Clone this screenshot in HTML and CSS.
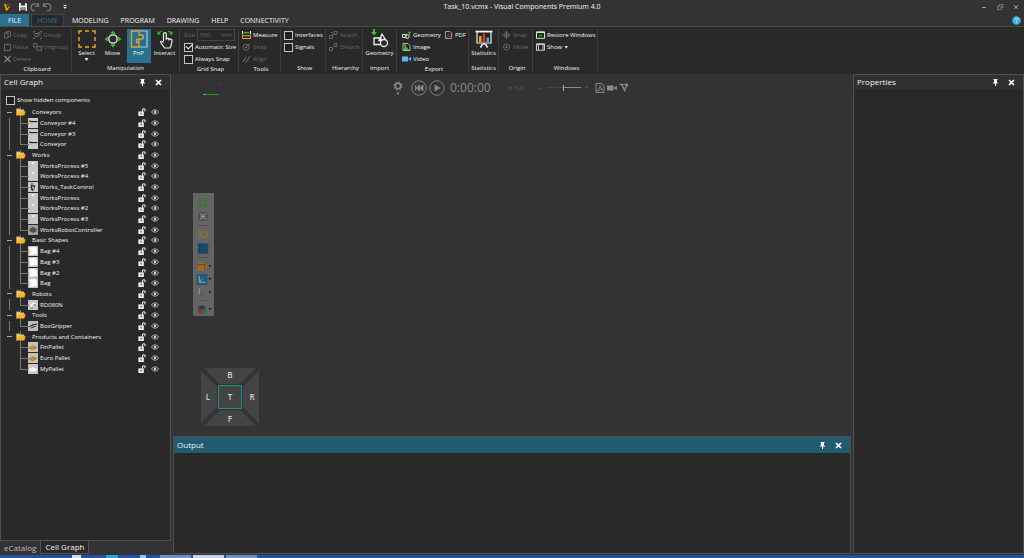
FILE: index.html
```html
<!DOCTYPE html>
<html lang="en">
<head>
<meta charset="utf-8">
<title>Task_10.vcmx - Visual Components Premium 4.0</title>
<link rel="stylesheet" href="styles.css">
</head>
<body>
<svg class="defs" aria-hidden="true">
  <symbol id="lock" viewBox="0 0 8 8"><path d="M4.500 3.500V2a1.300 1.300 0 0 1 2.600 0v1.300" fill="none" stroke="#f2f2f2" stroke-width="1.100"/><path d="M.4 3.400h5.400V8H.4z" fill="#f2f2f2"/><path d="M2.600 4.800h1v1.700h-1z" fill="#292929"/></symbol>
  <symbol id="eye" viewBox="0 0 8 6"><path d="M.4 3Q4-1.400 7.600 3 4 7.400.4 3z" fill="none" stroke="#d8d8d8" stroke-width=".8"/><circle cx="4" cy="3" r="1.200" fill="#d8d8d8"/></symbol>
  <symbol id="folder" viewBox="0 0 10 8"><path d="M.5 7.500V.8h3l.8 1H8v1.400" fill="#e9cf8b" stroke="#c9a55a" stroke-width=".5"/><path d="M2 3.200h7.700L8.300 7.600H.5z" fill="#ffb21c"/></symbol>
  <symbol id="pin" viewBox="0 0 6 7"><path d="M1 0h4v1h-.5v2L6 4.500H3.500V7h-1V4.500H0L1.500 3V1H1z" fill="#fff"/></symbol>
  <symbol id="close" viewBox="0 0 7 7"><path d="M1 1l5 5M6 1L1 6" stroke="#fff" stroke-width="1.700"/></symbol>
  <symbol id="t-conveyor" viewBox="0 0 10 10"><path d="M0 0h10v10H0z" fill="#c9c9c9"/><path d="M1 3l3 .7 5.500-.2" stroke="#20252a" stroke-width="1.200" fill="none"/><path d="M3 4.500v1.500M8 4v1.500" stroke="#888" stroke-width=".6"/></symbol>
  <symbol id="t-process" viewBox="0 0 10 10"><path d="M0 0h10v10H0z" fill="#c6c6c6"/><path d="M3 2l2-1 2 1-2 1z" fill="#f4f4f4"/></symbol>
  <symbol id="t-task" viewBox="0 0 10 10"><path d="M0 0h10v10H0z" fill="#c9c9c9"/><path d="M3 2l2 1.500L7 3v5l-3 1-1.500-3z" fill="#333"/><circle cx="4" cy="2" r="1.300" fill="#3d8fd0"/><path d="M4 5l2 1v2" stroke="#fff" fill="none"/></symbol>
  <symbol id="t-robot" viewBox="0 0 10 10"><path d="M0 0h10v10H0z" fill="#a0a0a0"/><path d="M1.500 4l3-2 4 1.500v3L5 8 2 6.500z" fill="#4a525b"/></symbol>
  <symbol id="t-bag" viewBox="0 0 10 10"><path d="M0 0h10v10H0z" fill="#c4c4c4"/><path d="M1.500 1.500l6-.7L9 3v5L2 9z" fill="#fff"/></symbol>
  <symbol id="t-arm" viewBox="0 0 10 10"><path d="M0 0h10v10H0z" fill="#c9c9c9"/><path d="M3 8V5l2-2 3 1M3 5h2" stroke="#f5f5f5" stroke-width="1.300" fill="none"/><path d="M2 8h3M7 4v2" stroke="#777"/></symbol>
  <symbol id="t-grip" viewBox="0 0 10 10"><path d="M0 0h10v10H0z" fill="#bdbdbd"/><path d="M1 6l3-2 5-1M3 7l5-2" stroke="#333"/></symbol>
  <symbol id="t-pallet" viewBox="0 0 10 10"><path d="M0 0h10v10H0z" fill="#c9c2b6"/><path d="M1 5l4-2 4 2-3 2z" fill="#cf8b2c"/><path d="M1 6l4 1.500L9 5" stroke="#7d4d14" fill="none" stroke-dasharray="1.500 .7"/></symbol>
  <symbol id="t-my" viewBox="0 0 10 10"><path d="M0 0h10v10H0z" fill="#c9c9c9"/><path d="M1 5l4-2 4 2v2l-4 .5L1 7z" fill="#f5f5f5"/></symbol>
</svg>
<div class="app">
  <header class="titlebar">
    <div class="quick">
      <svg class="logo" viewBox="0 0 8 8"><path d="M1 1h2l1 4.500L6 3h1L4.500 7.500H3z" fill="#f5a800"/><path d="M4 1.500h3" stroke="#7d6a35" stroke-width=".8"/></svg>
      <button aria-label="Save"><svg viewBox="0 0 10 10"><path d="M1 1h7l1 1v7H1z" fill="#eee"/><path d="M3 1h4v2.500H3zM2.500 5.500h5V9h-5z" fill="#333"/><path d="M3 7h4" stroke="#eee"/></svg></button>
      <button aria-label="Redo"><svg viewBox="0 0 10 10"><path d="M8.500 1v3.500H5M8 4.200A3.500 3.500 0 1 0 5 8.700" fill="none" stroke="#777" stroke-width="1.200"/></svg></button>
      <button aria-label="Undo"><svg viewBox="0 0 10 10"><path d="M1.500 1v3.500H5M2 4.200A3.500 3.500 0 1 1 5 8.700" fill="none" stroke="#777" stroke-width="1.200"/></svg></button>
      <button aria-label="Customize" class="more"><svg viewBox="0 0 6 6"><path d="M1.500 1.500h3" stroke="#eee"/><path d="M1.200 3h3.600L3 5z" fill="#eee"/></svg></button>
    </div>
    <h1>Task_10.vcmx - Visual Components Premium 4.0</h1>
    <div class="winbtns">
      <button aria-label="Minimize"><svg viewBox="0 0 8 8"><path d="M2 4.500h4" stroke="#999"/></svg></button>
      <button aria-label="Restore"><svg viewBox="0 0 8 8"><path d="M1.500 3.500h4v3h-4zM3 3.500v-2h4v3H5.500" fill="none" stroke="#888" stroke-width=".8"/></svg></button>
      <button aria-label="Close"><svg viewBox="0 0 8 8"><path d="M2 2l4 4M6 2L2 6" stroke="#999"/></svg></button>
    </div>
  </header>
  <nav class="tabs">
    <button class="file">FILE</button><button class="current">HOME</button><button>MODELING</button><button>PROGRAM</button><button>DRAWING</button><button>HELP</button><button>CONNECTIVITY</button>
    <button class="help" aria-label="Help topics"><svg viewBox="0 0 9 9"><circle cx="4.500" cy="4.500" r="4.300" fill="#42afe3"/><path d="M3.200 3.500q0-1.400 1.300-1.400t1.300 1.200q0 .8-1.300 1.500v.7M4.500 6.300v.9" stroke="#d8f0fb" fill="none" stroke-width=".9"/></svg></button>
  </nav>
  <div class="ribbon">
    <section class="group">
      <div class="cols clip">
        <div class="col">
          <button class="cmd off"><svg viewBox="0 0 8 8"><path d="M1 2h3.500v5H1zM3 2V.7h4v5H4.500" fill="none" stroke="#666"/></svg>Copy</button>
          <button class="cmd off"><svg viewBox="0 0 8 8"><path d="M1 1.500h6v6H1zM3 1h2" fill="none" stroke="#666"/></svg>Paste</button>
          <button class="cmd off"><svg viewBox="0 0 8 8"><path d="M1 1l6 6M7 1L1 7" stroke="#888" stroke-width="1.200"/></svg>Delete</button>
        </div>
        <div class="col">
          <button class="cmd off"><svg viewBox="0 0 9 8"><path d="M.5 2V.5H2M7 .5h1.500V2M8.500 6v1.500H7M2 7.500H.5V6M2 2.500h3v3H2zM4 2h3v3" fill="none" stroke="#666"/></svg>Group</button>
          <button class="cmd off"><svg viewBox="0 0 9 8"><path d="M.5 2V.5H4V4H.5zM4 3.500h4.500v4H4z" fill="none" stroke="#666"/></svg>Ungroup</button>
        </div>
      </div>
      <h2>Clipboard</h2>
    </section>
    <section class="group">
      <div class="cols bigs">
        <button class="big"><svg viewBox="0 0 20 20"><path d="M2 5V2h3M8 2h4M15 2h3v3M18 8v4M18 15v3h-3M12 18H8M5 18H2v-3M2 12V8" fill="none" stroke="#f0a818" stroke-width="1.400"/></svg>Select<i class="caret"></i></button>
        <button class="big"><svg viewBox="0 0 20 20"><circle cx="10" cy="10" r="4.200" fill="none" stroke="#eee" stroke-width="1.300"/><path d="M10 1.500l2.800 3.300H7.200zM10 18.500l2.800-3.300H7.200zM1.500 10l3.300-2.800v5.600zM18.500 10l-3.300-2.800v5.600z" fill="#35c31f"/></svg>Move</button>
        <button class="big on"><svg viewBox="0 0 20 20"><path d="M10 2h8v16h-8" fill="none" stroke="#a9cddd" stroke-width="1.200"/><path d="M10 2H2.500v16H10v-4.500H7.500v-3H10M10 2v4h2.500a2 2 0 1 1 0 4H10v3" fill="none" stroke="#e0a52e" stroke-width="1.300"/></svg>PnP</button>
        <button class="big"><svg viewBox="0 0 20 20"><path d="M8.500 12V5a1.400 1.400 0 0 1 2.800 0v4l5 1.300q1 .5.700 2L16 17l-1 2H9.500L5.500 13q1-1.700 3 .5M11.300 9v2M13.800 9.500v2" fill="none" stroke="#eee" stroke-width="1.200"/><path d="M4 3.500q1.500-1 3-1M13 2.500q1.500 0 3 1" fill="none" stroke="#35c31f" stroke-width="1.200"/><path d="M2.500 2v3.500H6zM17.500 2v3.500H14z" fill="#35c31f"/></svg>Interact</button>
      </div>
      <h2>Manipulation</h2>
    </section>
    <section class="group">
      <div class="col snap">
        <div class="size off"><label for="size">Size</label><span class="field"><input id="size" value="500" disabled><span>mm</span></span></div>
        <label class="check"><input type="checkbox" checked>Automatic Size</label>
        <label class="check"><input type="checkbox">Always Snap</label>
      </div>
      <h2>Grid Snap</h2>
    </section>
    <section class="group">
      <div class="col">
        <button class="cmd"><svg viewBox="0 0 9 8"><path d="M.5 0v3.500M8.500 0v3.500" stroke="#eee"/><path d="M1.500 1.700h6" stroke="#35c31f" stroke-width="1.200"/><path d="M.5 4.700h8v2.800h-8z" fill="none" stroke="#f0a818"/></svg>Measure</button>
        <button class="cmd off"><svg viewBox="0 0 9 8"><circle cx="4" cy="4.300" r="3" fill="none" stroke="#666"/><path d="M4 4.300L7.500.8M3 4.300h2" stroke="#777"/></svg>Snap</button>
        <button class="cmd off"><svg viewBox="0 0 9 8"><path d="M1 7l3-5M4 7.500L8 1" stroke="#777"/></svg>Align</button>
      </div>
      <h2>Tools</h2>
    </section>
    <section class="group">
      <div class="col">
        <label class="check"><input type="checkbox">Interfaces</label>
        <label class="check"><input type="checkbox">Signals</label>
      </div>
      <h2>Show</h2>
    </section>
    <section class="group">
      <div class="col">
        <button class="cmd off"><svg viewBox="0 0 9 8"><path d="M.5 4.500h3v3h-3zM5 .5h3v3H5zM3 4.500L5 3M2 1.500h1.500" fill="none" stroke="#666"/></svg>Attach</button>
        <button class="cmd off"><svg viewBox="0 0 9 8"><path d="M.5 4.500h3v3h-3zM5 .5h3v3H5z" fill="none" stroke="#666"/></svg>Detach</button>
      </div>
      <h2>Hierarchy</h2>
    </section>
    <section class="group">
      <div class="cols bigs">
        <button class="big"><svg viewBox="0 0 20 20"><path d="M4 0v4" stroke="#35c31f" stroke-width="2"/><path d="M1 3h6L4 6.500z" fill="#35c31f"/><path d="M4 9h7v6.500H4zM12 5l4 6.500H9z" fill="none" stroke="#eee" stroke-width="1.300"/><circle cx="14" cy="14" r="3.500" fill="#292929" stroke="#eee" stroke-width="1.300"/></svg>Geometry</button>
      </div>
      <h2>Import</h2>
    </section>
    <section class="group">
      <div class="cols export">
        <div class="col">
          <button class="cmd"><svg viewBox="0 0 9 8"><path d="M.5 3.500h3.500v3H.5z" fill="none" stroke="#ddd"/><circle cx="5.200" cy="5.500" r="1.900" fill="none" stroke="#ddd"/><path d="M7.500 4V1M6 2.200L7.500.7 9 2.200" stroke="#35c31f" fill="none"/></svg>Geometry</button>
          <button class="cmd"><svg viewBox="0 0 9 8"><path d="M1 .5h5L8 2.500v5H1z" fill="#222" stroke="#ddd" stroke-width=".8"/><path d="M2 7V5l2-2 3 4z" fill="#35c31f"/><circle cx="3" cy="2.500" r="1" fill="#f0a818"/></svg>Image</button>
          <button class="cmd"><svg viewBox="0 0 9 8"><path d="M0 1.500h6v5H0zM6 4l3-2.300v4.600z" fill="#5bb9ee"/></svg>Video</button>
        </div>
        <div class="col">
          <button class="cmd"><svg viewBox="0 0 8 8"><path d="M1 .5h4.500l1.500 1.500v5.500H1z" fill="#222" stroke="#bbb" stroke-width=".8"/><path d="M2 6.500q2-2 2-4.500 0 3 2.500 3.500-2.500-.3-4.500 1z" stroke="#b33427" fill="none" stroke-width=".7"/></svg>PDF</button>
        </div>
      </div>
      <h2>Export</h2>
    </section>
    <section class="group">
      <div class="cols bigs">
        <button class="big"><svg viewBox="0 0 20 20"><path d="M1.500 2.500h17" stroke="#fff" stroke-width="1.600"/><path d="M3 3h14v11H3z" fill="#222" stroke="#eee" stroke-width="1.200"/><path d="M10 14v2M6.500 18.500l2-3.500M13.500 18.500l-2-3.500" stroke="#eee" stroke-width="1.600"/><path d="M5 7h2.500v6H5z" fill="#f0a818"/><path d="M8.700 4.500h2.500V13H8.700z" fill="#e0342b"/><path d="M12.500 8.500H15V13h-2.500z" fill="#4aa8e0"/></svg>Statistics</button>
      </div>
      <h2>Statistics</h2>
    </section>
    <section class="group">
      <div class="col">
        <button class="cmd off"><svg viewBox="0 0 8 8"><circle cx="4" cy="4" r="2.300" fill="none" stroke="#666"/><path d="M4 0v8M0 4h8" stroke="#666"/></svg>Snap</button>
        <button class="cmd off"><svg viewBox="0 0 8 8"><circle cx="4" cy="4" r="3" fill="none" stroke="#666"/><circle cx="4" cy="4" r="1" fill="#777"/></svg>Move</button>
      </div>
      <h2>Origin</h2>
    </section>
    <section class="group">
      <div class="col">
        <button class="cmd"><svg viewBox="0 0 9 8"><path d="M.5.8h8v6.500h-8z" fill="#143214" stroke="#ddd"/><path d="M.5 1.500h8" stroke="#ddd"/><path d="M3 4.500h3" stroke="#35c31f"/></svg>Restore Windows</button>
        <button class="cmd"><svg viewBox="0 0 9 8"><path d="M.5.8h8v6.500h-8z" fill="#222" stroke="#ccc"/><path d="M.5 1.500h8M2.500 1v6M7 2v5" stroke="#ccc"/></svg>Show<i class="caret"></i></button>
      </div>
      <h2>Windows</h2>
    </section>
  </div>

  <main class="work">
    <aside class="left">
      <section class="panel">
        <header class="head"><h3>Cell Graph</h3><button aria-label="Pin"><svg viewBox="0 0 6 7"><use href="#pin"/></svg></button><button aria-label="Close"><svg viewBox="0 0 7 7"><use href="#close"/></svg></button></header>
        <label class="check hidden-check"><input type="checkbox">Show hidden components</label>
        <ul class="tree">
          <li class="folder"><button class="tog" aria-label="Collapse"></button><svg class="fi"><use href="#folder"/></svg><span>Conveyors</span><svg class="lk"><use href="#lock"/></svg><svg class="ey"><use href="#eye"/></svg></li>
          <li><svg class="th"><use href="#t-conveyor"/></svg><span>Conveyor #4</span><svg class="lk"><use href="#lock"/></svg><svg class="ey"><use href="#eye"/></svg></li>
          <li><svg class="th"><use href="#t-conveyor"/></svg><span>Conveyor #3</span><svg class="lk"><use href="#lock"/></svg><svg class="ey"><use href="#eye"/></svg></li>
          <li class="end"><svg class="th"><use href="#t-conveyor"/></svg><span>Conveyor</span><svg class="lk"><use href="#lock"/></svg><svg class="ey"><use href="#eye"/></svg></li>
          <li class="folder"><button class="tog" aria-label="Collapse"></button><svg class="fi"><use href="#folder"/></svg><span>Works</span><svg class="lk"><use href="#lock"/></svg><svg class="ey"><use href="#eye"/></svg></li>
          <li><svg class="th"><use href="#t-process"/></svg><span>WorksProcess #5</span><svg class="lk"><use href="#lock"/></svg><svg class="ey"><use href="#eye"/></svg></li>
          <li><svg class="th"><use href="#t-process"/></svg><span>WorksProcess #4</span><svg class="lk"><use href="#lock"/></svg><svg class="ey"><use href="#eye"/></svg></li>
          <li><svg class="th"><use href="#t-task"/></svg><span>Works_TaskControl</span><svg class="lk"><use href="#lock"/></svg><svg class="ey"><use href="#eye"/></svg></li>
          <li><svg class="th"><use href="#t-process"/></svg><span>WorksProcess</span><svg class="lk"><use href="#lock"/></svg><svg class="ey"><use href="#eye"/></svg></li>
          <li><svg class="th"><use href="#t-process"/></svg><span>WorksProcess #2</span><svg class="lk"><use href="#lock"/></svg><svg class="ey"><use href="#eye"/></svg></li>
          <li><svg class="th"><use href="#t-process"/></svg><span>WorksProcess #3</span><svg class="lk"><use href="#lock"/></svg><svg class="ey"><use href="#eye"/></svg></li>
          <li class="end"><svg class="th"><use href="#t-robot"/></svg><span>WorksRobotController</span><svg class="lk"><use href="#lock"/></svg><svg class="ey"><use href="#eye"/></svg></li>
          <li class="folder"><button class="tog" aria-label="Collapse"></button><svg class="fi"><use href="#folder"/></svg><span>Basic Shapes</span><svg class="lk"><use href="#lock"/></svg><svg class="ey"><use href="#eye"/></svg></li>
          <li><svg class="th"><use href="#t-bag"/></svg><span>Bag #4</span><svg class="lk"><use href="#lock"/></svg><svg class="ey"><use href="#eye"/></svg></li>
          <li><svg class="th"><use href="#t-bag"/></svg><span>Bag #3</span><svg class="lk"><use href="#lock"/></svg><svg class="ey"><use href="#eye"/></svg></li>
          <li><svg class="th"><use href="#t-bag"/></svg><span>Bag #2</span><svg class="lk"><use href="#lock"/></svg><svg class="ey"><use href="#eye"/></svg></li>
          <li class="end"><svg class="th"><use href="#t-bag"/></svg><span>Bag</span><svg class="lk"><use href="#lock"/></svg><svg class="ey"><use href="#eye"/></svg></li>
          <li class="folder"><button class="tog" aria-label="Collapse"></button><svg class="fi"><use href="#folder"/></svg><span>Robots</span><svg class="lk"><use href="#lock"/></svg><svg class="ey"><use href="#eye"/></svg></li>
          <li class="end"><svg class="th"><use href="#t-arm"/></svg><span>RD080N</span><svg class="lk"><use href="#lock"/></svg><svg class="ey"><use href="#eye"/></svg></li>
          <li class="folder"><button class="tog" aria-label="Collapse"></button><svg class="fi"><use href="#folder"/></svg><span>Tools</span><svg class="lk"><use href="#lock"/></svg><svg class="ey"><use href="#eye"/></svg></li>
          <li class="end"><svg class="th"><use href="#t-grip"/></svg><span>BoxGripper</span><svg class="lk"><use href="#lock"/></svg><svg class="ey"><use href="#eye"/></svg></li>
          <li class="folder"><button class="tog" aria-label="Collapse"></button><svg class="fi"><use href="#folder"/></svg><span>Products and Containers</span><svg class="lk"><use href="#lock"/></svg><svg class="ey"><use href="#eye"/></svg></li>
          <li class="last"><svg class="th"><use href="#t-pallet"/></svg><span>FinPallet</span><svg class="lk"><use href="#lock"/></svg><svg class="ey"><use href="#eye"/></svg></li>
          <li class="last"><svg class="th"><use href="#t-pallet"/></svg><span>Euro Pallet</span><svg class="lk"><use href="#lock"/></svg><svg class="ey"><use href="#eye"/></svg></li>
          <li class="last end"><svg class="th"><use href="#t-my"/></svg><span>MyPallet</span><svg class="lk"><use href="#lock"/></svg><svg class="ey"><use href="#eye"/></svg></li>
        </ul>
      </section>
      <nav class="side-tabs"><button>eCatalog</button><button class="current">Cell Graph</button></nav>
    </aside>

    <div class="center">
      <section class="view">
        <svg class="axes" viewBox="0 0 20 16"><path d="M1 13h16v1H1z" fill="#239a1a"/><path d="M1 13h3v1H1z" fill="#35d31f"/><path d="M17 1h1v5h-1z" fill="#7d2a20"/><path d="M16 5h1v8h-1z" fill="#20207a"/></svg>
        <div class="sim">
          <button aria-label="Settings" class="gear"><svg viewBox="0 0 10 15"><circle cx="5" cy="5" r="2.600" fill="none" stroke="#8a8a8a" stroke-width="1.400"/><circle cx="5" cy="5" r="3.900" fill="none" stroke="#8a8a8a" stroke-width="1.400" stroke-dasharray="1.600 1.463"/><path d="M3.300 11.500h3.400L5 14z" fill="#8a8a8a"/></svg></button>
          <button aria-label="Reset"><svg viewBox="0 0 16 16"><circle cx="8" cy="8" r="7.200" fill="none" stroke="#868686" stroke-width=".9"/><path d="M4.500 5v6M8.500 5v6l-3.500-3zM12 5v6L8.500 8z" fill="#868686" stroke="#868686" stroke-width=".8"/></svg></button>
          <button aria-label="Play"><svg viewBox="0 0 16 16"><circle cx="8" cy="8" r="7.200" fill="none" stroke="#868686" stroke-width=".9"/><path d="M5.500 4.500L12 8l-6.500 3.500z" fill="#868686"/></svg></button>
          <time>0:00:00</time>
          <span class="speed">x&nbsp; 1.0</span>
          <label class="slide"><span>–</span><input type="range" aria-label="Speed" value="50"><span>+</span></label>
          <button aria-label="Export PDF" class="sm"><svg viewBox="0 0 10 10"><path d="M1 .5h5.500L9 3v6.500H1z" fill="none" stroke="#8a8a8a"/><path d="M2.500 8Q5 5.500 5 2.500q0 3.500 3 4-3-.3-5.500 1.500z" fill="none" stroke="#8a8a8a" stroke-width=".8"/></svg></button>
          <button aria-label="Record" class="sm"><svg viewBox="0 0 10 10"><path d="M0 2.500h6.500v5H0zM7 4.500L10 3v4L7 5.500z" fill="#8a8a8a"/></svg></button>
          <button aria-label="Record viewer" class="sm"><svg viewBox="0 0 10 10"><path d="M.5 1.500h2.300l3.200 7M5.500 1.500H8L5.500 7.500" fill="none" stroke="#8a8a8a" stroke-width="1.300"/><path d="M3 1.500h2.500M8.500 1v2.500" stroke="#8a8a8a"/></svg></button>
        </div>
        <div class="viewtools">
          <button aria-label="Fill"><svg viewBox="0 0 12 12"><path d="M2 4.500V2h2.500M7.500 2H10v2.500M10 7.500V10H7.500M4.500 10H2V7.500M2 2l3 3M10 2L7 5M10 10L7 7M2 10l3-3" fill="none" stroke="#2f7a28" stroke-width="1.300"/></svg></button>
          <button aria-label="Fill selected"><svg viewBox="0 0 12 12"><path d="M2 2h8v8H2z" fill="none" stroke="#444" stroke-width="1.500"/><path d="M4 6h4M6 4v4M2 2l2 2M10 2L8 4M2 10l2-2M10 10L8 8" stroke="#999"/></svg></button>
          <hr>
          <button aria-label="Headlight"><svg viewBox="0 0 12 12"><path d="M10 3H6.500a3 3 0 0 0 0 6H10V3M10 6h2M1 3h3M1 6h3M1 9h3" fill="none" stroke="#a3752a"/></svg></button>
          <button aria-label="Perspective"><svg viewBox="0 0 12 12"><path d="M0 0h12v12H0z" fill="#22597a"/><path d="M2 2h8v8H2zM4 4h4v4H4zM2 2l2 2" fill="none" stroke="#12303f" stroke-width=".8"/></svg></button>
          <hr>
          <button class="drop" aria-label="Render mode"><svg viewBox="0 0 12 12"><path d="M1 4l2-2h8v6l-2 2H1z" fill="#a36b20"/><path d="M1 4h8v6M9 4l2-2" stroke="#4a3618" fill="none" stroke-width=".7"/></svg><i class="caret"></i></button>
          <button class="drop" aria-label="Coordinates"><svg viewBox="0 0 12 12"><path d="M0 0h12v12H0z" fill="#22597a"/><path d="M3 2v7h7M3 9l4-4" stroke="#9ab3c0" fill="none"/></svg><i class="caret"></i></button>
          <button class="drop" aria-label="Frame types"><svg viewBox="0 0 12 12"><path d="M3 1v8" stroke="#999"/><path d="M3 9h7" stroke="#9a3b35"/><path d="M3 9l5-4" stroke="#2f7a28"/></svg><i class="caret"></i></button>
          <hr>
          <button class="drop" aria-label="Views"><svg viewBox="0 0 12 12"><path d="M6 1l4.500 2.500L6 6 1.500 3.500z" fill="#29364d"/><path d="M1.500 3.500L6 6v5.500L1.500 9z" fill="#8b332c"/><path d="M10.500 3.500L6 6v5.500L10.500 9z" fill="#286a4a"/></svg><i class="caret"></i></button>
        </div>
        <svg class="compass" viewBox="0 0 58 58" role="img" aria-label="View selector">
          <path d="M3 0h52L39 16H19zM3 58h52L39 42H19zM0 3v52l16-16V19zM58 3v52L42 39V19z" fill="#444"/>
          <path d="M17.500 17.500h23v23h-23z" fill="#444" stroke="#1a8f8f"/>
          <g fill="#d0d0d0" font-size="8" text-anchor="middle"><text x="29" y="10">B</text><text x="29" y="32">T</text><text x="29" y="54">F</text><text x="7" y="32">L</text><text x="51" y="32">R</text></g>
        </svg>
      </section>
      <section class="panel output">
        <header class="head"><h3>Output</h3><button aria-label="Pin"><svg viewBox="0 0 6 7"><use href="#pin"/></svg></button><button aria-label="Close"><svg viewBox="0 0 7 7"><use href="#close"/></svg></button></header>
      </section>
    </div>

    <aside class="panel props">
      <header class="head"><h3>Properties</h3><button aria-label="Pin"><svg viewBox="0 0 6 7"><use href="#pin"/></svg></button><button aria-label="Close"><svg viewBox="0 0 7 7"><use href="#close"/></svg></button></header>
    </aside>
  </main>
  <footer class="taskbar"><i class="a"></i><i class="b"></i><i class="c"></i><i class="win"></i><i class="win active"></i><i class="win"></i></footer>
</div>
</body>
</html>
```
FILE: styles.css
```css
* { box-sizing: border-box; }
html, body { height: 100%; margin: 0; }
body { background: #333; color: #f4f4f4; font: 7px/10px "Open Sans", "Noto Sans", sans-serif; overflow: hidden; }
button { background: none; border: 0; padding: 0; margin: 0; color: inherit; font: inherit; display: flex; align-items: center; }
h1, h2, h3 { margin: 0; font-weight: 400; }
svg { display: block; flex: none; }
.defs { position: absolute; width: 0; height: 0; }
.app { height: 100vh; display: flex; flex-direction: column; }

.titlebar { height: 13px; display: grid; grid-template-columns: 1fr auto 1fr; align-items: center; }
.titlebar h1 { font-size: 7px; padding-left: 20px; }
.quick { display: flex; align-items: center; padding-left: 3px; gap: 2px; }
.quick svg { width: 10px; height: 10px; }
.quick .logo { width: 8px; height: 8px; margin-right: 5px; }
.quick .more { padding-left: 8px; }
.quick .more svg { width: 6px; height: 6px; }
.winbtns { display: flex; justify-content: flex-end; gap: 8px; padding-right: 4px; }
.winbtns svg { width: 8px; height: 8px; }

.tabs { height: 14px; display: flex; padding-top: 1px; border-bottom: 1px solid #4a4a4a; }
.tabs button { padding: 2px 6px 0; }
.tabs .file { background: #2a7190; padding: 2px 8px 0; margin-right: 2px; }
.tabs .current { background: #292929; border: 1px solid #444; border-bottom: 0; color: #2f7294; padding: 1px 5px 0; margin-right: 2px; }
.tabs .help { margin-left: auto; padding: 0 3px; }
.help svg { width: 9px; height: 9px; }

.ribbon { height: 47px; background: #292929; display: grid; grid-template-columns: 72px 108px 59px 42px 45px 37px 34px 72px 30px 34px 65px; padding: 2px 0 0; }
.group { display: flex; flex-direction: column; justify-content: space-between; height: 43px; border-right: 1px solid #3d3d3d; padding-left: 3px; }
.group:has(.bigs) { padding-left: 0; }
.group h2 { font-size: 6px; line-height: 8px; text-align: center; }
.cols { display: flex; gap: 3px; }
.clip { gap: 2px; }
.cmd { height: 12px; gap: 2px; font-size: 6px; white-space: nowrap; }
.cmd svg { width: 9px; height: 8px; }
.clip .cmd { gap: 1px; }
.export { padding-left: 2px; }
.off { color: #6a6a6a; }
.bigs { justify-content: center; gap: 2px; }
.big { flex-direction: column; width: 24px; height: 34px; font-size: 6px; line-height: 9px; }
.big svg { width: 20px; height: 20px; }
.big.on { background: #2a7190; }
.caret { width: 4px; height: 3px; background: currentColor; clip-path: polygon(0 0, 100% 0, 50% 100%); }
.check { display: flex; align-items: center; gap: 2px; height: 12px; font-size: 6px; white-space: nowrap; }
.snap { padding-left: 1px; }
.check input { appearance: none; width: 9px; height: 9px; margin: 0; border: 1px solid #c4c4c4; background: #202020; flex: none; display: grid; place-items: center; }
.check input:checked::before { content: ""; width: 5px; height: 3px; border: solid #fff; border-width: 0 0 1px 1px; rotate: -45deg; margin-bottom: 2px; }
.size { display: flex; align-items: center; height: 12px; font-size: 6px; gap: 2px; }
.field { display: flex; flex: 1; border: 1px solid #444; margin-right: 3px; padding: 0 2px; }
.field input { flex: 1; width: 10px; min-width: 0; padding: 0; border: 0; background: none; color: inherit; font: inherit; }

.work { flex: 1; min-height: 0; display: grid; grid-template-columns: 171px minmax(0, 1fr) 171px; column-gap: 2px; padding-bottom: 1px; }
.left { display: flex; flex-direction: column; }
.panel { background: #292929; border: 1px solid #505050; }
.left .panel { flex: 1; }
.head { height: 14px; display: flex; align-items: center; padding: 0 8px 0 3px; gap: 9px; background: #303030; }
.head h3 { flex: 1; font-size: 8px; }
.head svg { width: 7px; height: 7px; }
.hidden-check { margin: 5px 0 1px 5px; gap: 2px; }

.tree { list-style: none; margin: 0; padding: 0; height: 267px; display: grid; grid-auto-rows: 1fr; font-size: 6px; }
.tree li { position: relative; display: flex; align-items: center; padding: 0 11px 0 27px; min-height: 0; line-height: 10px; }
.tree li::before { content: ""; position: absolute; left: 8px; top: 0; bottom: 0; border-left: 1px solid #777; }
.tree li::after { content: ""; position: absolute; left: 19px; top: 0; height: 50%; width: 8px; border: solid #777; border-width: 0 0 1px 1px; }
.tree li:not(.end) { background: linear-gradient(#777, #777) 19px 0 / 1px 100% no-repeat; }
.tree .folder { padding-left: 6px; background: none; }
.tree .folder::before, .tree .folder::after, .tree .last::before { display: none; }
.tree span { flex: 1; padding-left: 2px; white-space: nowrap; }
.tree .folder span { padding-left: 6px; }
.tog { width: 5px; height: 1px; background: #aaa; margin-right: 4px; }
.fi { width: 10px; height: 8px; }
.th { width: 10px; height: 10px; }
.lk { width: 8px; height: 8px; margin-right: 5px; }
.ey { width: 8px; height: 6px; }

.side-tabs { display: flex; height: 13px; font-size: 8px; }
.side-tabs button { padding: 0 4px; }
.side-tabs button:first-child { color: #bbb; }
.side-tabs .current { background: #292929; border: 1px solid #505050; border-top: 0; }

.center { display: flex; flex-direction: column; min-width: 0; }
.view { flex: 1; position: relative; background: #333; }
.output { height: 118px; }
.output .head { height: 16px; background: #225b70; }
.axes { position: absolute; left: 29px; top: 7px; width: 20px; height: 16px; }
.sim { position: absolute; left: 220px; top: 5px; display: flex; align-items: center; gap: 2px; color: #8a8a8a; }
.sim svg { width: 16px; height: 16px; }
.sim .gear svg { width: 10px; height: 15px; }
.sim .gear { padding: 2px 6px 0 0; }
.sim .sm svg { width: 10px; height: 10px; }
.sim time { font-size: 12px; line-height: 16px; padding-left: 3px; }
.speed { color: #3b7ba5; font-size: 6px; padding-left: 16px; }
.slide { display: flex; align-items: center; gap: 4px; color: #356a8c; padding: 0 4px 0 14px; }
.slide input { appearance: none; width: 34px; height: 8px; margin: 0; background: linear-gradient(90deg, #2c4a5a 50%, #8a8a8a 50%) center / 100% 1px no-repeat; }
.slide input::-webkit-slider-thumb { appearance: none; width: 1px; height: 6px; background: #aaa; }
.viewtools { position: absolute; left: 20px; top: 119px; width: 21px; background: #646464; padding: 3px 0 1px 3px; display: flex; flex-direction: column; gap: 1px; color: #222; }
.viewtools button { height: 13px; padding-left: 1px; }
.viewtools .drop { height: 12px; padding-left: 0; }
.viewtools svg { width: 12px; height: 11px; }
.viewtools hr { width: 10px; margin: 1px 0 1px 3px; border: 0; border-top: 1px solid #505050; }
.compass { position: absolute; left: 28px; bottom: 10px; width: 58px; height: 58px; }
.compass text { font-weight: 600; }

.taskbar { height: 3px; background: #2450a5; display: flex; gap: 2px; padding-left: 72px; }
.taskbar .a { width: 9px; background: #cfe0f4; margin-right: 23px; }
.taskbar .b { width: 12px; background: #2aa2e2; margin-right: 20px; }
.taskbar .c { width: 6px; background: #8cc4ee; margin-right: 12px; }
.taskbar .win { width: 31px; background: #7390c6; }
.taskbar .active { background: #c6d4ec; }
```
